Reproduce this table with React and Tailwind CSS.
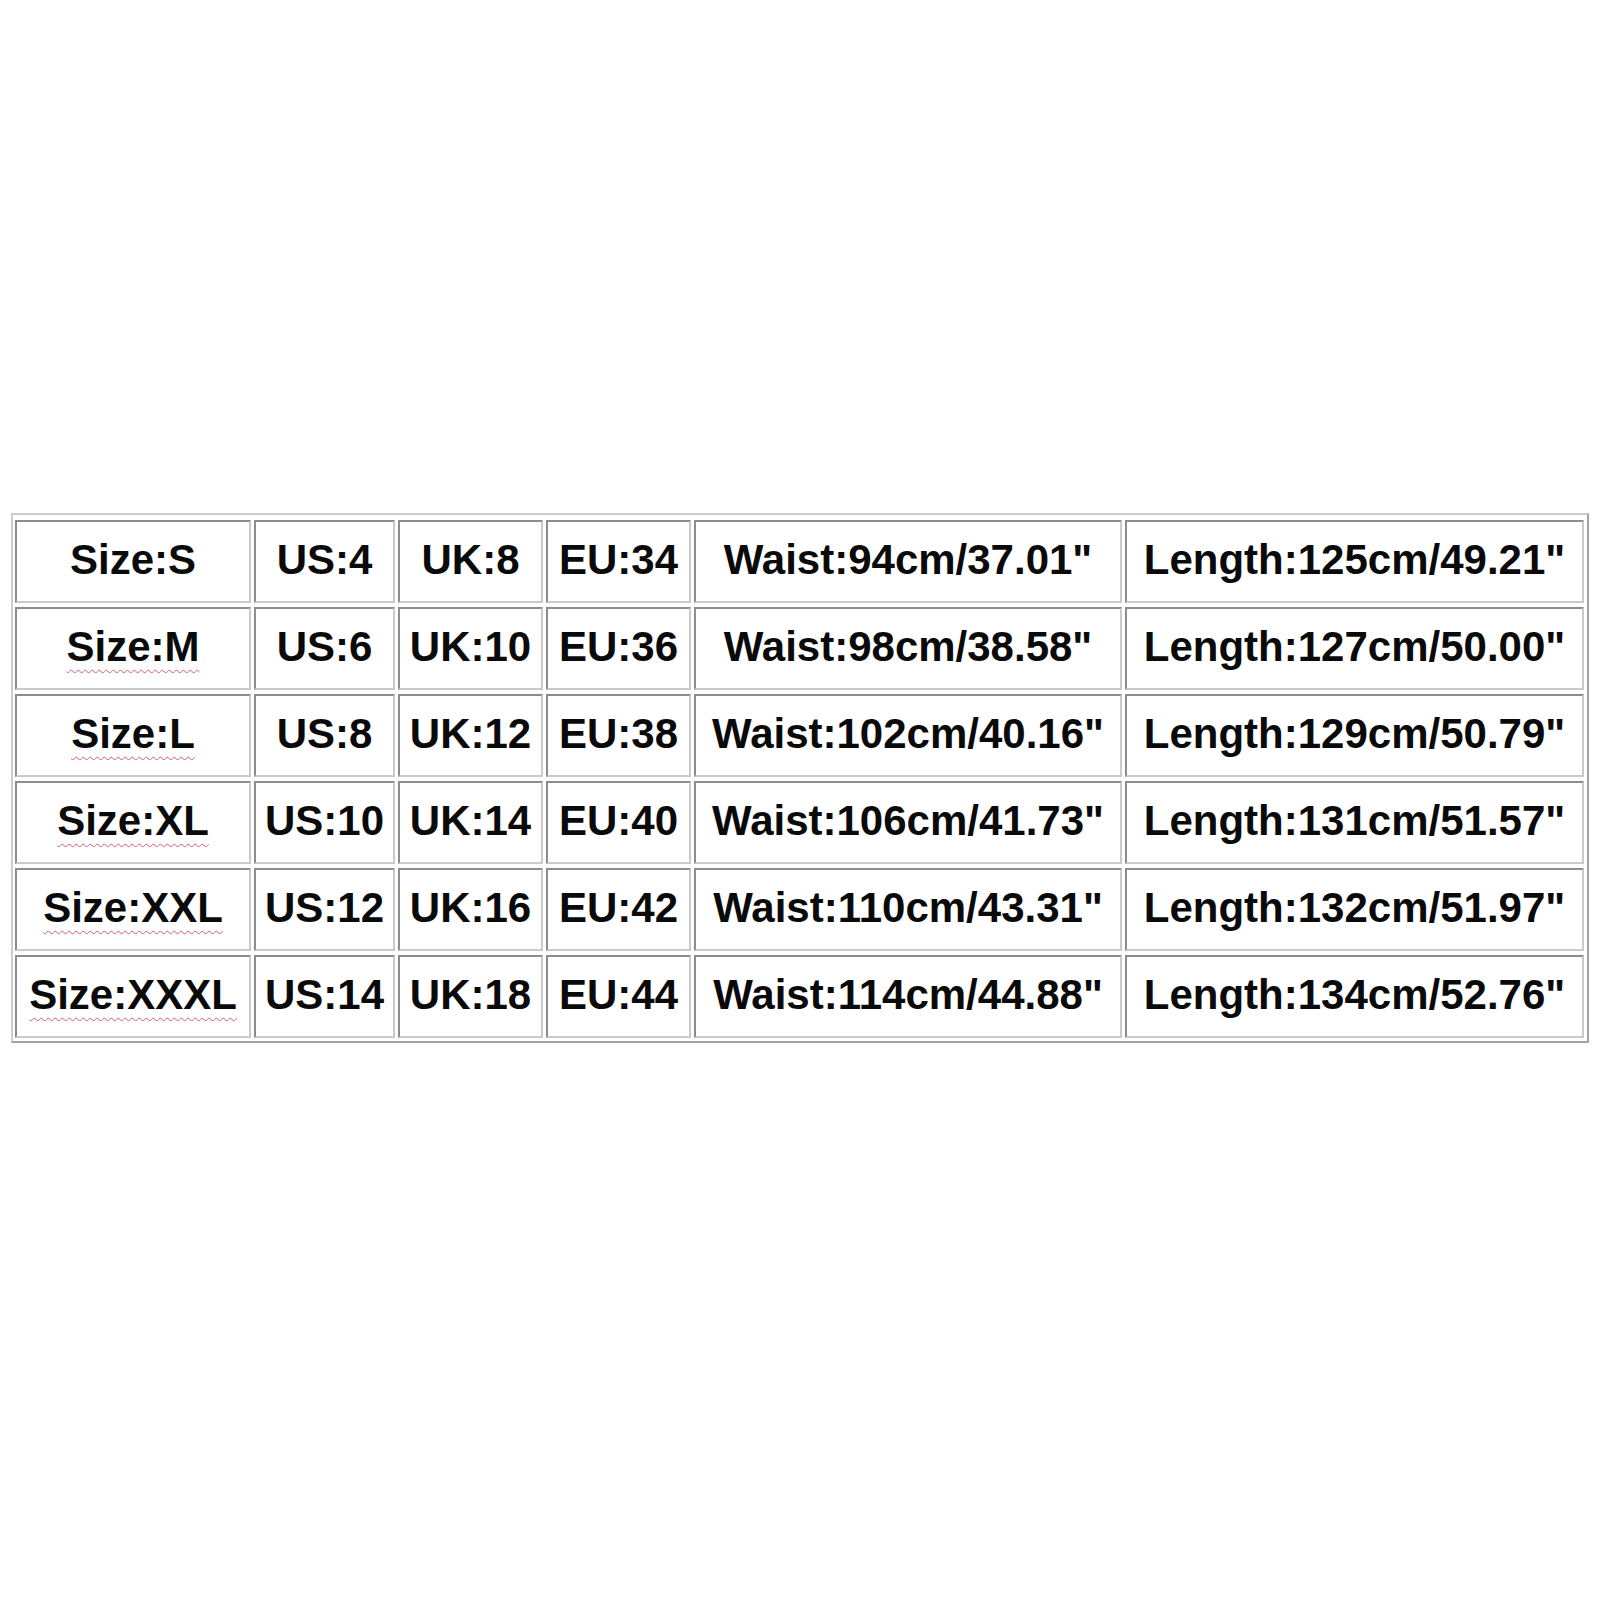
import React from "react";

const rows = [
  ["Size:S", "US:4", "UK:8", "EU:34", "Waist:94cm/37.01\"", "Length:125cm/49.21\""],
  ["Size:M", "US:6", "UK:10", "EU:36", "Waist:98cm/38.58\"", "Length:127cm/50.00\""],
  ["Size:L", "US:8", "UK:12", "EU:38", "Waist:102cm/40.16\"", "Length:129cm/50.79\""],
  ["Size:XL", "US:10", "UK:14", "EU:40", "Waist:106cm/41.73\"", "Length:131cm/51.57\""],
  ["Size:XXL", "US:12", "UK:16", "EU:42", "Waist:110cm/43.31\"", "Length:132cm/51.97\""],
  ["Size:XXXL", "US:14", "UK:18", "EU:44", "Waist:114cm/44.88\"", "Length:134cm/52.76\""],
];

export default function App() {
  return (
    <div className="w-[1600px] h-[1600px] bg-white pt-[513px] pl-[11px]" style={{ fontFamily: '"Liberation Sans", Arial, sans-serif' }}>
      <div className="w-[1578px] border-2 border-t-[#cdcdcd] border-l-[#cdcdcd] border-r-[#a3a3a3] border-b-[#a3a3a3] pt-[5px] pl-[2px] pr-[3px] pb-[3px]">
        <div className="grid grid-cols-[236px_141px_145px_145px_428px_459px] gap-x-[3px] gap-y-[4px]">
          {rows.map((row, ri) =>
            row.map((cell, ci) => (
              <div
                key={ri + "-" + ci}
                className="h-[83px] pb-[4px] flex items-center justify-center border-2 border-t-[#8c8c8c] border-l-[#8c8c8c] border-r-[#cacaca] border-b-[#cacaca] text-[42px] font-bold text-[#0a0a0a] leading-none whitespace-nowrap"
              >
                {ci === 0 && ri > 0 ? (
                  <span className="underline decoration-wavy decoration-[#d65a78] decoration-1 underline-offset-[8px]">{cell}</span>
                ) : (
                  <span>{cell}</span>
                )}
              </div>
            ))
          )}
        </div>
      </div>
    </div>
  );
}
